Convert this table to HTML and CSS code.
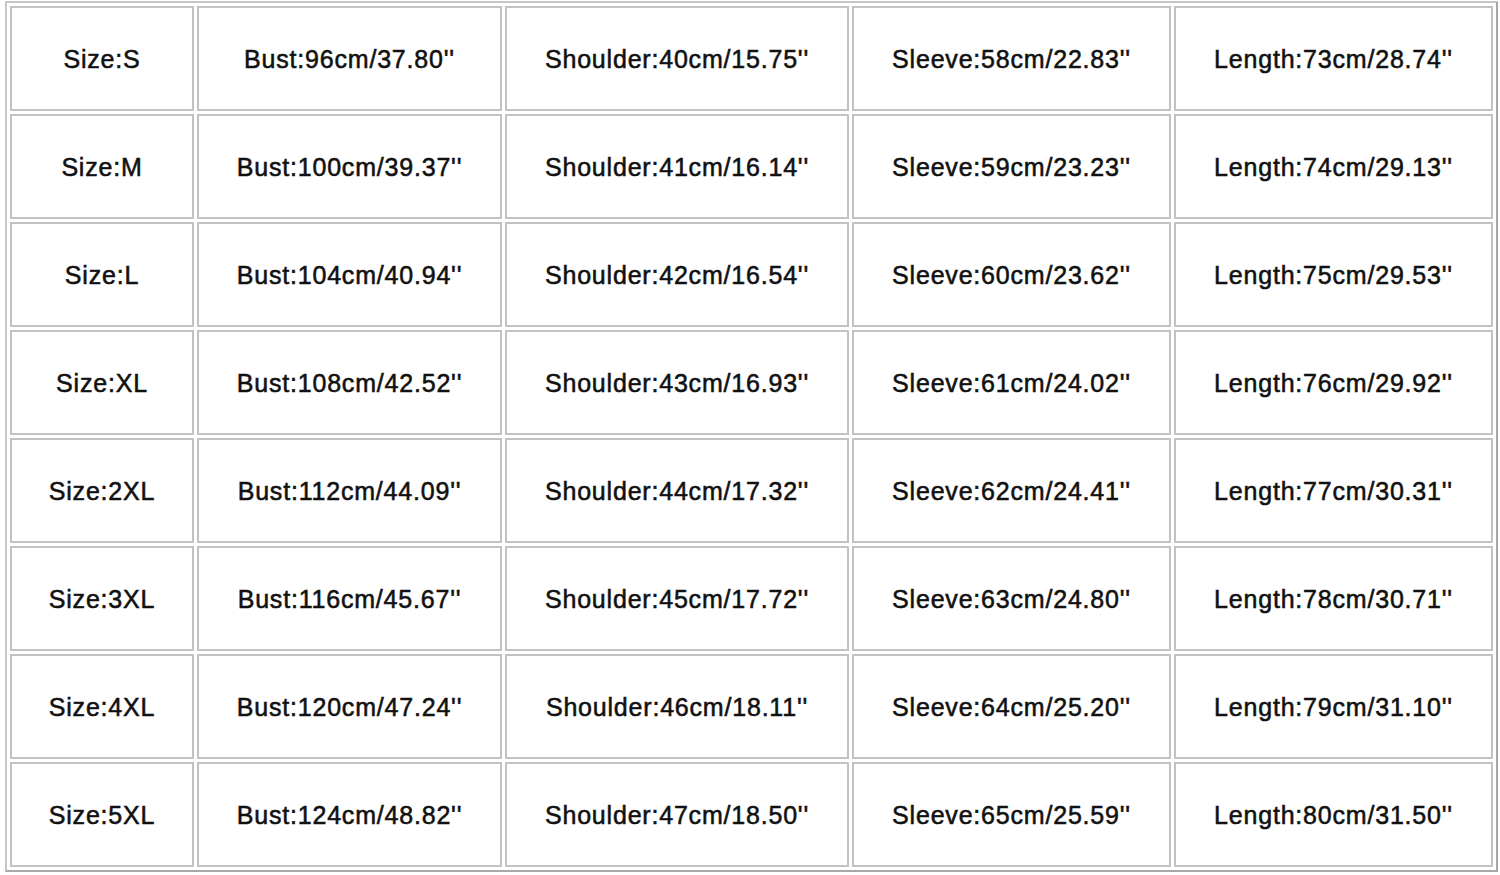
FILE: index.html
```html
<!DOCTYPE html>
<html>
<head>
<meta charset="utf-8">
<link rel="stylesheet" href="styles.css">
</head>
<body>
<table class="sizes">
<tr><td class="c1">Size:S</td><td class="c2">Bust:96cm/37.80''</td><td class="c3">Shoulder:40cm/15.75''</td><td class="c4">Sleeve:58cm/22.83''</td><td class="c5">Length:73cm/28.74''</td></tr>
<tr><td class="c1">Size:M</td><td class="c2">Bust:100cm/39.37''</td><td class="c3">Shoulder:41cm/16.14''</td><td class="c4">Sleeve:59cm/23.23''</td><td class="c5">Length:74cm/29.13''</td></tr>
<tr><td class="c1">Size:L</td><td class="c2">Bust:104cm/40.94''</td><td class="c3">Shoulder:42cm/16.54''</td><td class="c4">Sleeve:60cm/23.62''</td><td class="c5">Length:75cm/29.53''</td></tr>
<tr><td class="c1">Size:XL</td><td class="c2">Bust:108cm/42.52''</td><td class="c3">Shoulder:43cm/16.93''</td><td class="c4">Sleeve:61cm/24.02''</td><td class="c5">Length:76cm/29.92''</td></tr>
<tr><td class="c1">Size:2XL</td><td class="c2">Bust:112cm/44.09''</td><td class="c3">Shoulder:44cm/17.32''</td><td class="c4">Sleeve:62cm/24.41''</td><td class="c5">Length:77cm/30.31''</td></tr>
<tr><td class="c1">Size:3XL</td><td class="c2">Bust:116cm/45.67''</td><td class="c3">Shoulder:45cm/17.72''</td><td class="c4">Sleeve:63cm/24.80''</td><td class="c5">Length:78cm/30.71''</td></tr>
<tr><td class="c1">Size:4XL</td><td class="c2">Bust:120cm/47.24''</td><td class="c3">Shoulder:46cm/18.11''</td><td class="c4">Sleeve:64cm/25.20''</td><td class="c5">Length:79cm/31.10''</td></tr>
<tr><td class="c1">Size:5XL</td><td class="c2">Bust:124cm/48.82''</td><td class="c3">Shoulder:47cm/18.50''</td><td class="c4">Sleeve:65cm/25.59''</td><td class="c5">Length:80cm/31.50''</td></tr>
</table>
</body>
</html>
```

FILE: styles.css
```css
html, body {
  margin: 0;
  padding: 0;
  background: #ffffff;
}

.sizes {
  margin: 1px 0 0 5px;
  border-collapse: separate;
  border-spacing: 3px;
  table-layout: fixed;
  width: 1492px;
  border: 2px solid #c6c6c6;
  border-right-color: #a8a8a8;
  border-bottom-color: #a8a8a8;
}

.sizes td {
  box-sizing: border-box;
  height: 105px;
  padding: 2px 0 0 0;
  border: 2px solid #c2c2c2;
  text-align: center;
  vertical-align: middle;
  font-family: "Liberation Sans", Arial, sans-serif;
  font-size: 25px;
  letter-spacing: 0.8px;
  color: #111111;
  -webkit-text-stroke: 0.55px #111111;
  white-space: nowrap;
}

.sizes .c1 { width: 184px; }
.sizes .c2 { width: 305px; }
.sizes .c3 { width: 344px; }
.sizes .c4 { width: 319px; }
.sizes .c5 { width: 319px; }
```
